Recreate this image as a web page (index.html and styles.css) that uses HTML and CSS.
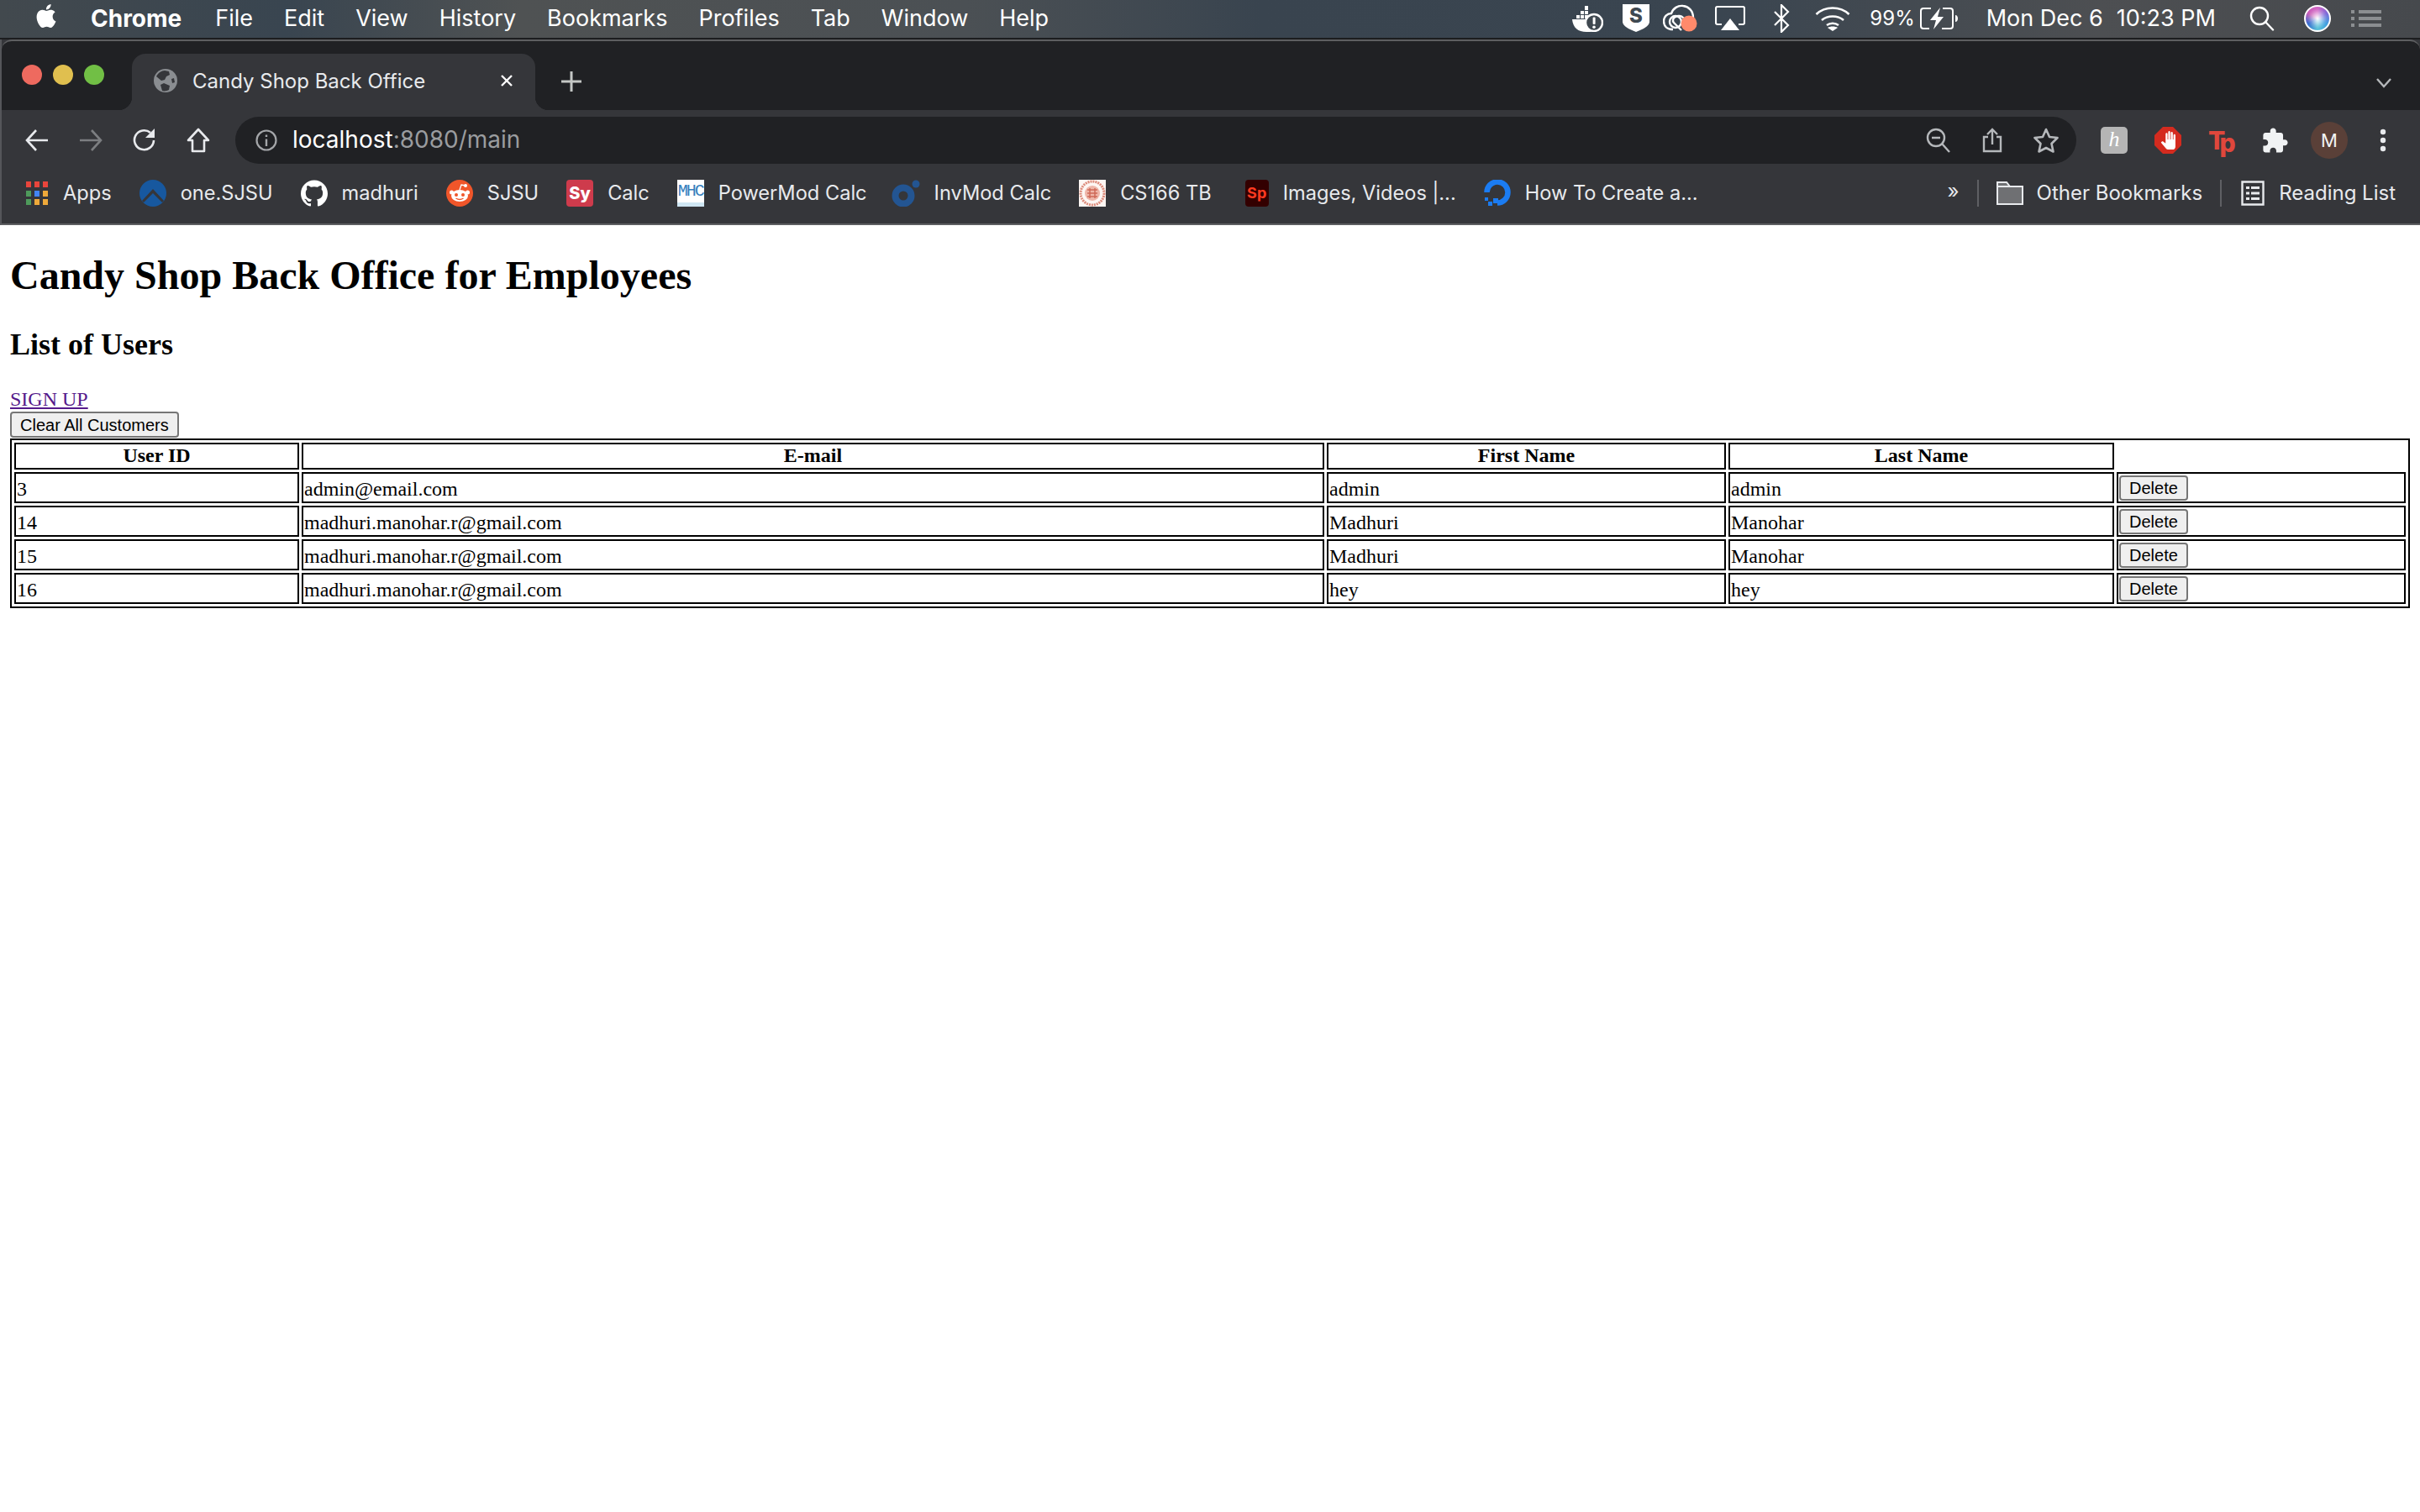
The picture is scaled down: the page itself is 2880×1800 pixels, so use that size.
FILE: index.html
```html
<!DOCTYPE html>
<html lang="en">
<head>
    <meta charset="UTF-8">
    <title>Candy Shop Back Office</title>
    <link rel="stylesheet" href="styles.css">
</head>
<body>
<!-- mac menu bar -->
<div class="menubar">
    <div class="menus">
        <svg class="apple" viewBox="0 0 24 24"><path fill="#fff" d="M12.152 6.896c-.948 0-2.415-1.078-3.96-1.04-2.04.027-3.91 1.183-4.961 3.014-2.117 3.675-.546 9.103 1.519 12.09 1.013 1.454 2.208 3.09 3.792 3.039 1.52-.065 2.09-.987 3.935-.987 1.831 0 2.35.987 3.96.948 1.637-.026 2.676-1.48 3.676-2.948 1.156-1.688 1.636-3.325 1.662-3.415-.039-.013-3.182-1.221-3.22-4.857-.026-3.04 2.48-4.494 2.597-4.559-1.429-2.09-3.623-2.324-4.39-2.376-2-.156-3.675 1.09-4.61 1.09zM15.53 3.83c.843-1.012 1.4-2.427 1.245-3.83-1.207.052-2.662.805-3.532 1.818-.78.896-1.454 2.338-1.273 3.714 1.338.104 2.715-.688 3.559-1.701"/></svg>
        <b class="app">Chrome</b>
        <span>File</span><span>Edit</span><span>View</span><span>History</span><span>Bookmarks</span><span>Profiles</span><span>Tab</span><span>Window</span><span>Help</span>
    </div>
    <div class="status">
        <svg class="st-docker" width="38" height="32" viewBox="0 0 38 32" fill="#fff">
            <path d="M1 17h24c0 0 0 3 1 5-2 4-1 7 1 9-3 1-6 1-9 1C8 32 2 27 1 17z"/>
            <rect x="6" y="12" width="4" height="4"/><rect x="11" y="12" width="4" height="4"/><rect x="16" y="12" width="4" height="4"/><rect x="11" y="7" width="4" height="4"/><rect x="16" y="7" width="4" height="4"/><rect x="16" y="1" width="4" height="5"/>
            <circle cx="27" cy="21" r="10" fill="#3f4850" stroke="#fff" stroke-width="2.4"/>
            <rect x="25.6" y="14.5" width="3" height="8.5" rx="1"/><circle cx="27" cy="26.2" r="1.8"/>
        </svg>
        <svg class="st-shield" width="32" height="33" viewBox="0 0 32 33">
            <path fill="#fff" d="M0 0h32v21c0 5-8 9-16 12C8 30 0 26 0 21z"/>
            <text x="16" y="22" text-anchor="middle" class="shield-s">S</text>
        </svg>
        <svg class="st-cc" width="42" height="34" viewBox="0 0 42 34" fill="none" stroke="#fff" stroke-width="2.4">
            <path d="M12 30C5 30 1 26 1 20c0-5 4-9 9-9 2-6 8-10 14-9 7 1 12 6 12 14"/>
            <path d="M22 31l-9-9c-2-2-1-6 2-7 3-2 7-1 9 1l3 3"/><circle cx="15" cy="21" r="7"/>
            <circle cx="31" cy="23" r="9.5" fill="#ff8a6b" stroke="none"/>
        </svg>
        <svg class="st-air" width="36" height="30" viewBox="0 0 36 30" fill="none">
            <path stroke="#fff" stroke-width="2.2" d="M8 22H3c-1 0-2-1-2-2V3c0-1 1-2 2-2h30c1 0 2 1 2 2v17c0 1-1 2-2 2h-5"/>
            <path fill="#fff" d="M18 15l11 14H7z"/>
        </svg>
        <svg class="st-bt" width="20" height="34" viewBox="0 0 20 34" fill="none" stroke="#fff" stroke-width="2.2"><path d="M2 9l16 16-8 8V1l8 8L2 25"/></svg>
        <svg class="st-wifi" width="42" height="30" viewBox="0 0 42 30" fill="none" stroke="#fff" stroke-width="2.6">
            <path d="M1.5 10C12 0 30 0 40.500 10"/><path d="M8 17c7-6 19-6 26 0"/><path d="M14 23c4-3 10-3 14 0"/>
            <path fill="#fff" stroke="none" d="M21 30l-6-4c3-2 9-2 12 0z"/>
        </svg>
        <span class="st-pct">99%</span>
        <svg class="st-batt" width="46" height="26" viewBox="0 0 46 26" fill="none">
            <path stroke="#fff" stroke-width="2" d="M13 1H4C2 1 1 2 1 4v18c0 2 1 3 3 3h7M27 1h9c2 0 3 1 3 3v18c0 2-1 3-3 3h-10"/>
            <path fill="#fff" d="M24 0L12 15h7l-3 11 12-15h-7zM42 9c2 0 3 2 3 4s-1 4-3 4z"/>
        </svg>
        <span class="st-date">Mon Dec 6</span>
        <span class="st-time">10:23 PM</span>
        <svg class="st-search" width="30" height="30" viewBox="0 0 30 30" fill="none" stroke="#fff" stroke-width="2.4"><circle cx="12" cy="12" r="10"/><path stroke-linecap="round" d="M19 19l9 9.500"/></svg>
        <div class="st-siri"></div>
        <svg class="st-list" width="36" height="20" viewBox="0 0 36 20" fill="#8b8e91">
            <rect x="0" y="0" width="4" height="4"/><rect x="9" y="0" width="27" height="4"/><rect x="0" y="8" width="4" height="4"/><rect x="9" y="8" width="27" height="4"/><rect x="0" y="16" width="4" height="4"/><rect x="9" y="16" width="27" height="4"/>
        </svg>
    </div>
</div>

<div class="window">
    <div class="tabstrip">
        <div class="lights"><i class="red"></i><i class="yellow"></i><i class="green"></i></div>
        <div class="tab">
            <svg class="globe" width="28" height="28" viewBox="0 0 28 28"><circle cx="14" cy="14" r="14" fill="#8a8d91"/><path fill="#35363a" d="M13 2c-4 0-8 3-10 7l6 5 4-1 2-4 4-2-1-4zM12 17l-4 2 2 7c3 1 6 0 8-1l1-5zM24 11l-3 1 1 5 3-1z"/></svg>
            <span class="tab-title">Candy Shop Back Office</span>
            <svg class="tab-close" width="16" height="16" viewBox="0 0 16 16" stroke="#fff" stroke-width="2.4"><path d="M2 2l12 12M14 2L2 14"/></svg>
        </div>
        <svg class="newtab" width="24" height="24" viewBox="0 0 24 24" stroke="#c4c7c5" stroke-width="3"><path d="M12 0v24M0 12h24"/></svg>
        <svg class="tabs-more" width="18" height="12" viewBox="0 0 18 12" fill="none" stroke="#b5b8bb" stroke-width="2.4"><path d="M1 1l8 9 8-9"/></svg>
    </div>

    <div class="toolbar">
        <div class="nav">
            <svg width="28" height="28" viewBox="0 0 28 28" fill="none" stroke="#e8eaed" stroke-width="2.6"><path d="M27 14H2M13 2L2 14l11 12"/></svg>
            <svg width="28" height="28" viewBox="0 0 28 28" fill="none" stroke="#7c7e81" stroke-width="2.6"><path d="M1 14h25M15 2l11 12-11 12"/></svg>
            <svg width="28" height="28" viewBox="0 0 28 28" fill="none" stroke="#e8eaed" stroke-width="2.6"><path d="M25 14a11.500 11.500 0 1 1-4-9"/><path fill="#e8eaed" stroke="none" d="M26 0v11H15z"/></svg>
            <svg width="28" height="30" viewBox="0 0 28 30" fill="none" stroke="#e8eaed" stroke-width="2.6"><path stroke-linejoin="round" d="M14 2L2 15h5v13h14V15h5z"/></svg>
        </div>
        <div class="omnibox">
            <svg class="info" width="26" height="26" viewBox="0 0 26 26" fill="none" stroke="#a4a6a9" stroke-width="2.2"><circle cx="13" cy="13" r="11.500"/><path stroke-width="2.400" d="M13 11.500V20M13 6.500v2.600"/></svg>
            <span class="url">localhost<em>:8080/main</em></span>
            <svg class="omni-ico" width="30" height="30" viewBox="0 0 30 30" fill="none" stroke="#b5b8bb" stroke-width="2.4"><circle cx="12" cy="12" r="10"/><path d="M7 12h10M19 19l9 10"/></svg>
            <svg class="omni-ico" width="24" height="30" viewBox="0 0 24 30" fill="none" stroke="#b5b8bb" stroke-width="2.4"><path d="M7 11H2v17h20V11h-5M12 20V2M6 8l6-6 6 6"/></svg>
            <svg class="omni-ico" width="30" height="30" viewBox="0 0 30 30" fill="none" stroke="#b5b8bb" stroke-width="2.6"><path stroke-linejoin="round" d="M15 2l4 9 9.500 1-7 7 2 9.500L15 24l-8.500 4.500 2-9.500-7-7 9.500-1z"/></svg>
        </div>
        <div class="exts">
            <div class="ext-h">h</div>
            <svg width="32" height="32" viewBox="0 0 32 32"><path fill="#d42b1f" d="M10 0h12l10 10v12L22 32H10L0 22V10z"/><g transform="translate(7 5) scale(.78 .92)"><path fill="#fff" d="M23 5.500V20c0 2.200-1.800 4-4 4h-7.300c-1.080 0-2.100-.43-2.850-1.190L1 14.830s1.260-1.230 1.300-1.250c.22-.19.49-.29.79-.29.22 0 .42.06.6.16.04.01 4.310 2.460 4.310 2.460V4c0-.83.67-1.500 1.500-1.500S11 3.170 11 4v7h1V1.500c0-.83.67-1.500 1.500-1.500S15 .67 15 1.500V11h1V2.500c0-.83.67-1.500 1.500-1.500s1.500.67 1.500 1.500V11h1V5.500c0-.83.67-1.500 1.500-1.500s1.500.67 1.500 1.500z"/></g></svg>
            <div class="ext-tp">T<span>p</span></div>
            <svg width="32" height="32" viewBox="1 0 23 23"><path fill="#f1f3f4" d="M20.500 11H19V7c0-1.100-.9-2-2-2h-4V3.500C13 2.120 11.880 1 10.500 1S8 2.120 8 3.500V5H4c-1.100 0-1.990.9-1.990 2v3.800H3.500c1.490 0 2.700 1.210 2.700 2.700s-1.210 2.700-2.700 2.700H2V20c0 1.100.9 2 2 2h3.800v-1.500c0-1.490 1.210-2.700 2.700-2.700 1.490 0 2.700 1.210 2.700 2.700V22H17c1.100 0 2-.9 2-2v-4h1.500c1.380 0 2.500-1.120 2.500-2.500S21.880 11 20.500 11z"/></svg>
            <div class="avatar">M</div>
            <svg class="kebab" width="8" height="28" viewBox="0 0 8 28" fill="#e8eaed"><circle cx="4" cy="4" r="3.200"/><circle cx="4" cy="14" r="3.200"/><circle cx="4" cy="24" r="3.200"/></svg>
        </div>
    </div>

    <div class="bookmarks">
        <div class="bm bm-apps">
            <svg width="26" height="28" viewBox="0 0 26 28">
                <rect x="0" y="0" width="6" height="7" fill="#e8453c"/><rect x="10" y="0" width="6" height="7" fill="#e8453c"/><rect x="20" y="0" width="6" height="7" fill="#e8453c"/>
                <rect x="0" y="11" width="6" height="7" fill="#4e9a5b"/><rect x="10" y="11" width="6" height="7" fill="#4285f4"/><rect x="20" y="11" width="6" height="7" fill="#eea93a"/>
                <rect x="0" y="21" width="6" height="7" fill="#4e9a5b"/><rect x="10" y="21" width="6" height="7" fill="#eea93a"/><rect x="20" y="21" width="6" height="7" fill="#eea93a"/>
            </svg>
            <span>Apps</span>
        </div>
        <div class="bm">
            <svg width="32" height="32" viewBox="0 0 32 32"><circle cx="16" cy="16" r="16" fill="#17589f"/><path fill="#35363a" d="M16 11L29 25l-2 2-11-11L5 27l-2-2z"/></svg>
            <span>one.SJSU</span>
        </div>
        <div class="bm">
            <svg width="32" height="32" viewBox="0 0 24 24"><path fill="#fff" d="M12 .297c-6.630 0-12 5.373-12 12 0 5.303 3.438 9.800 8.205 11.385.6.113.82-.258.82-.577 0-.285-.01-1.040-.015-2.040-3.338.724-4.042-1.610-4.042-1.610C4.422 18.070 3.633 17.700 3.633 17.700c-1.087-.744.084-.729.084-.729 1.205.084 1.838 1.236 1.838 1.236 1.070 1.835 2.809 1.305 3.495.998.108-.776.417-1.305.76-1.605-2.665-.3-5.466-1.332-5.466-5.930 0-1.310.465-2.380 1.235-3.220-.135-.303-.54-1.523.105-3.176 0 0 1.005-.322 3.300 1.230.96-.267 1.980-.399 3-.405 1.020.006 2.040.138 3 .405 2.280-1.552 3.285-1.230 3.285-1.230.645 1.653.24 2.873.12 3.176.765.84 1.230 1.910 1.230 3.220 0 4.610-2.805 5.625-5.475 5.920.42.36.81 1.096.81 2.220 0 1.606-.015 2.896-.015 3.286 0 .315.21.69.825.57C20.565 22.092 24 17.592 24 12.297c0-6.627-5.373-12-12-12"/></svg>
            <span>madhuri</span>
        </div>
        <div class="bm">
            <svg width="32" height="32" viewBox="0 0 32 32">
                <circle cx="16" cy="16" r="16" fill="#f0562a"/><ellipse cx="16" cy="19" rx="10" ry="7" fill="#fff"/>
                <circle cx="6.500" cy="15" r="2.500" fill="#fff"/><circle cx="25.500" cy="15" r="2.500" fill="#fff"/><circle cx="23" cy="7" r="2" fill="#fff"/>
                <path fill="none" stroke="#fff" stroke-width="1.300" d="M16 12l2-6 5 1"/>
                <circle cx="12" cy="18" r="2" fill="#f0562a"/><circle cx="20" cy="18" r="2" fill="#f0562a"/>
                <path fill="none" stroke="#f0562a" stroke-width="1.300" d="M11.500 22c3 2 6 2 9 0"/>
            </svg>
            <span>SJSU</span>
        </div>
        <div class="bm">
            <div class="fav fav-sy">Sy</div>
            <span>Calc</span>
        </div>
        <div class="bm">
            <div class="fav fav-mhc">MHC</div>
            <span>PowerMod Calc</span>
        </div>
        <div class="bm bm-inv">
            <svg width="34" height="32" viewBox="0 0 34 32"><circle cx="14" cy="19" r="9.500" fill="none" stroke="#235592" stroke-width="8"/><circle cx="29" cy="5" r="4.500" fill="#235592"/></svg>
            <span>InvMod Calc</span>
        </div>
        <div class="bm">
            <svg width="32" height="32" viewBox="0 0 32 32"><rect width="32" height="32" fill="#fdf6f3"/><circle cx="16" cy="16" r="14" fill="none" stroke="#dc8a7a" stroke-width="3" stroke-dasharray="2 1"/><circle cx="16" cy="16" r="9" fill="#eeb5a8"/><path stroke="#cf6a58" stroke-width="1.500" fill="none" d="M10 12h12M10 16h12M10 20h12M13 10v12M19 10v12"/></svg>
            <span>CS166 TB</span>
        </div>
        <div class="bm bm-sp">
            <div class="fav fav-sp">Sp</div>
            <span>Images, Videos |...</span>
        </div>
        <div class="bm">
            <svg width="32" height="32" viewBox="0 0 32 32"><path fill="none" stroke="#1b7cf2" stroke-width="6.500" d="M16 27.500A12.500 12.500 0 1 0 3.500 15"/><rect x="11" y="22" width="6" height="6" fill="#1b7cf2"/><rect x="5" y="26" width="5" height="5" fill="#1b7cf2"/><rect x="1" y="21" width="4" height="4" fill="#1b7cf2"/></svg>
            <span>How To Create a...</span>
        </div>
        <div class="bm-right">
            <span class="chev">»</span>
            <i class="bm-sep"></i>
            <div class="bm bm-other">
                <svg width="32" height="28" viewBox="0 0 32 28"><path fill="#6f7073" stroke="#e8eaed" stroke-width="2" d="M1 1h11l4 5h15v21H1z"/><path fill="none" stroke="#e8eaed" stroke-width="2" d="M1 6h15"/></svg>
                <span>Other Bookmarks</span>
            </div>
            <i class="bm-sep"></i>
            <div class="bm bm-read">
                <svg width="28" height="30" viewBox="0 0 28 30" fill="#e8eaed"><path fill="none" stroke="#e8eaed" stroke-width="2.400" d="M1.500 1.500h25v27h-25z"/><rect x="6" y="7" width="4" height="3"/><rect x="12" y="7" width="10" height="3"/><rect x="6" y="13.500" width="4" height="3"/><rect x="12" y="13.500" width="10" height="3"/><rect x="6" y="20" width="4" height="3"/><rect x="12" y="20" width="10" height="3"/></svg>
                <span>Reading List</span>
            </div>
        </div>
    </div>
</div>

<div class="page">
    <h1>Candy Shop Back Office for Employees</h1>
    <h2>List of Users</h2>
    <a class="signup" href="#">SIGN UP</a>
    <button class="btn btn-clear">Clear All Customers</button>
    <table class="users">
        <colgroup>
            <col class="c-id"><col class="c-mail"><col class="c-first"><col class="c-last"><col>
        </colgroup>
        <tr><th>User ID</th><th>E-mail</th><th>First Name</th><th>Last Name</th></tr>
        <tr><td>3</td><td>admin@email.com</td><td>admin</td><td>admin</td><td><button class="btn">Delete</button></td></tr>
        <tr><td>14</td><td>madhuri.manohar.r@gmail.com</td><td>Madhuri</td><td>Manohar</td><td><button class="btn">Delete</button></td></tr>
        <tr><td>15</td><td>madhuri.manohar.r@gmail.com</td><td>Madhuri</td><td>Manohar</td><td><button class="btn">Delete</button></td></tr>
        <tr><td>16</td><td>madhuri.manohar.r@gmail.com</td><td>hey</td><td>hey</td><td><button class="btn">Delete</button></td></tr>
    </table>
</div>
</body>
</html>
```

FILE: styles.css
```css
html,body{
    height: 100%;
    overflow: hidden;
}
*{
    margin:0;
    padding:0;
    box-sizing: border-box;
}
body{
    background: #fff;
    font-family: "Liberation Serif", serif;
}
svg{
    display: block;
    flex: none;
}

/* menu bar */
.menubar{
    height: 47px;
    padding-bottom: 2px;
    display: flex;
    justify-content: space-between;
    align-items: center;
    color: #fff;
    font-family: Inter, sans-serif;
    font-size: 27px;
    background: linear-gradient(90deg,#42494e 0,#394550 340px,#4f5253 620px,#4b5054 1150px,#39444f 1500px,#3a4550 2050px,#4d4f52 2500px,#46494d 2880px);
    border-bottom: 2px solid #1c1d1f;
}
.menus{
    display: flex;
    align-items: center;
    padding-left: 41px;
    gap: 37px;
}
.apple{
    width: 28px;
    height: 32px;
    margin-top: -6px;
}
.app{
    font-size: 28px;
    font-weight: 700;
    margin: 0 3px 0 2px;
}
.status{
    display: flex;
    align-items: center;
    padding-right: 46px;
}
.shield-s{
    font: 800 24px Inter, sans-serif;
    fill: #3f4850;
}
.st-shield{ margin-left: 23px; }
.st-cc{ margin-left: 16px; }
.st-air{ margin-left: 20px; }
.st-bt{ margin-left: 33px; }
.st-wifi{ margin-left: 30px; }
.st-pct{ margin-left: 23px; font-size: 24px; }
.st-batt{ margin-left: 6px; }
.st-date{ margin-left: 33px; }
.st-time{ margin-left: 16px; }
.st-search{ margin-left: 40px; }
.st-siri{
    width: 32px;
    height: 32px;
    margin-left: 35px;
    border: 2px solid #fff;
    border-radius: 50%;
    background: radial-gradient(circle,#fff 0,rgba(255,255,255,.2) 45%,transparent 60%),conic-gradient(#d466c6,#7f6ad8,#3f9fe0,#5cc3d8,#3a6fd0,#c95fb8,#d466c6);
}
.st-list{ margin-left: 24px; }

/* browser window */
.window{
    background: #35363a;
    color: #fff;
    font-family: Inter, sans-serif;
    border-bottom: 2px solid #5d5e61;
    border-left: 2px solid #55565a;
}
.tabstrip{
    height: 84px;
    padding-top: 15px;
    display: flex;
    background: #202124;
    border-top: 2px solid #5d5e60;
    border-radius: 12px 12px 0 0;
    position: relative;
}
.lights{
    display: flex;
    gap: 13px;
    padding: 13px 0 0 24px;
    width: 155px;
}
.lights i{
    width: 24px;
    height: 24px;
    border-radius: 50%;
}
.red{ background: #ee6a5f; }
.yellow{ background: #e0bf4f; }
.green{ background: #71bf45; }
.tab{
    width: 480px;
    height: 67px;
    padding: 0 26px 3px 26px;
    display: flex;
    align-items: center;
    background: #35363a;
    border-radius: 16px 16px 0 0;
    position: relative;
}
.tab::before,.tab::after{
    content: "";
    position: absolute;
    bottom: 0;
    width: 16px;
    height: 16px;
}
.tab::before{
    left: -16px;
    background: radial-gradient(circle at 0 0,#202124 16px,#35363a 16.500px);
}
.tab::after{
    right: -16px;
    background: radial-gradient(circle at 100% 0,#202124 16px,#35363a 16.500px);
}
.tab-title{
    margin-left: 18px;
    flex: 1;
    font-size: 24px;
    color: #e8eaed;
}
.newtab{
    margin: 21px 0 0 31px;
}
.tabs-more{
    position: absolute;
    right: 34px;
    top: 44px;
}
.toolbar{
    height: 64px;
    padding-top: 8px;
    display: flex;
    align-items: flex-start;
}
.nav{
    width: 278px;
    height: 56px;
    display: flex;
    align-items: center;
    gap: 36px;
    padding-left: 28px;
}
.omnibox{
    width: 2191px;
    height: 56px;
    padding: 0 21px 0 24px;
    display: flex;
    align-items: center;
    gap: 37px;
    background: #202124;
    border-radius: 28px;
}
.info{
    margin-right: -19px;
}
.url{
    flex: 1;
    font-size: 28px;
    margin-top: -2px;
    color: #fff;
}
.url em{
    font-style: normal;
    color: #9a9c9f;
}
.exts{
    display: flex;
    align-items: center;
    gap: 32px;
    height: 56px;
    padding-left: 29px;
}
.ext-h{
    width: 32px;
    height: 32px;
    background: #b5b5b5;
    border-radius: 5px;
    color: #fff;
    text-align: center;
    font: italic 26px/30px "Liberation Serif", serif;
}
.ext-tp{
    width: 32px;
    color: #e0473c;
    font-size: 30px;
    font-weight: 800;
    letter-spacing: -5px;
    line-height: 32px;
}
.ext-tp span{
    position: relative;
    top: 3px;
}
.avatar{
    width: 44px;
    height: 44px;
    margin: 0 -6px;
    background: #5a4038;
    border-radius: 50%;
    text-align: center;
    font-size: 22px;
    line-height: 44px;
    color: #f1f3f4;
}
.kebab{
    margin-left: 12px;
}
.bookmarks{
    height: 71px;
    padding: 0 29px 2px 29px;
    display: flex;
    align-items: center;
    gap: 33px;
    font-size: 23.600px;
    color: #e8eaed;
}
.bm{
    display: flex;
    align-items: center;
    gap: 17px;
    white-space: nowrap;
}
.bm-apps{
    gap: 18px;
}
.bm-inv{
    margin-left: -4px;
}
.bm-sp{
    margin-left: 7px;
}
.bm-other{
    gap: 16px;
    font-size: 24px;
}
.bm-read{
    margin-left: 2px;
    font-size: 24px;
}
.fav{
    width: 32px;
    height: 32px;
    flex: none;
    text-align: center;
    overflow: hidden;
}
.fav-sy{
    background: #ce3b4c;
    border-radius: 4px;
    color: #fff;
    font-size: 20px;
    font-weight: 800;
    line-height: 33px;
}
.fav-mhc{
    background: #fff;
    color: #3680bd;
    font: 20px/28px "Liberation Mono", monospace;
    letter-spacing: -2px;
    border-bottom: 5px solid #cfe6f3;
}
.fav-sp{
    width: 28px;
    background: #330000;
    border-radius: 4px;
    color: #ff3a20;
    font-size: 18px;
    font-weight: 700;
    line-height: 32px;
}
.bm-right{
    margin-left: auto;
    display: flex;
    align-items: center;
    gap: 21px;
}
.chev{
    font-size: 24px;
    margin-top: -4px;
}
.bm-sep{
    width: 2px;
    height: 32px;
    background: #5f6064;
}

/* page content */
.page{
    padding: 0 12px;
    color: #000;
    font-size: 24px;
}
h1{
    margin: 33px 0 35px;
    font-size: 48px;
    line-height: 54px;
}
h2{
    margin: 0 0 28px;
    font-size: 36px;
    line-height: 41px;
}
.signup{
    display: block;
    padding-top: 2px;
    line-height: 29px;
    color: #551a8b;
}
.btn{
    display: block;
    height: 30px;
    padding: 0 10px;
    background: #efefef;
    border: 2px solid #767676;
    border-radius: 4px;
    color: #000;
    font: 20px/24px "Liberation Sans", sans-serif;
}
.btn-clear{
    height: 31px;
    margin-bottom: 1px;
}
.users{
    width: 2856px;
    table-layout: fixed;
    border: 2px solid #000;
    border-spacing: 3px;
}
.c-id{ width: 339px; }
.c-mail{ width: 1217px; }
.c-first{ width: 475px; }
.c-last{ width: 459px; }
th,td{
    border: 2px solid #000;
    line-height: 27px;
}
th{
    height: 32px;
    padding: 0 0 1px;
    text-align: center;
}
td{
    height: 37px;
    padding: 3px 1px 0;
}
td:last-child{
    padding: 1px;
}
th:empty{
    border: none;
}
```
